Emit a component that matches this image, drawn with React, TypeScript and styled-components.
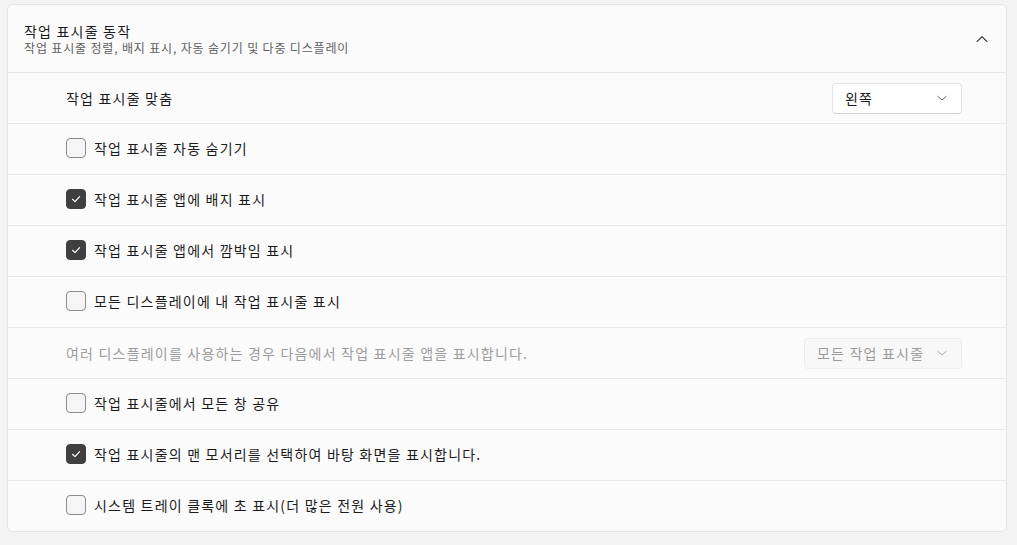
import styled, {createGlobalStyle} from 'styled-components'

const GlobalStyle = createGlobalStyle`
  html, body {
    margin: 0;
    padding: 0;
    background: #f3f3f3;
    font-family: "Noto Sans CJK KR", "Noto Sans", sans-serif;
    letter-spacing: 0.075em;
    color: #1b1b1b;
  }
`

const Page = styled.div`
  padding: 4px 10px 14px 7px;
`

const Card = styled.section`
  background: #fbfbfb;
  border: 1px solid #e5e5e5;
  border-radius: 6px;
  overflow: hidden;
`

const Header = styled.div`
  display: flex;
  align-items: center;
  height: 67px;
  padding: 0 18px 0 16px;
  border-bottom: 1px solid #e5e5e5;
`

const HeaderText = styled.div`
  flex: 1;
  display: flex;
  flex-direction: column;
  padding-top: 1px;
`

const Title = styled.div`
  font-size: 14px;
  line-height: 18px;
  color: #1b1b1b;
`

const Subtitle = styled.div`
  font-size: 12px;
  line-height: 16px;
  letter-spacing: 0.07em;
  color: #5f5f5f;
`

const Row = styled.div<{ $check?: boolean }>`
  display: flex;
  align-items: center;
  box-sizing: border-box;
  height: 50px;
  padding: 0 44px ${p => (p.$check ? '2px' : '0')} 58px;
  border-top: 1px solid #e8e8e8;
  &:first-of-type { border-top: none; height: 50px; }
  & + & { height: 51px; }
`

const Label = styled.span<{ $disabled?: boolean }>`
  flex: 1;
  font-size: 14px;
  color: ${p => (p.$disabled ? '#9c9c9c' : '#1b1b1b')};
`

const CheckLabel = styled.label`
  display: flex;
  align-items: center;
  gap: 8px;
  font-size: 14px;
  color: #1b1b1b;
`

const Box = styled.span<{ $checked?: boolean }>`
  display: inline-flex;
  align-items: center;
  justify-content: center;
  box-sizing: border-box;
  width: 20px;
  height: 20px;
  border-radius: 4px;
  border: 1px solid ${p => (p.$checked ? '#3f3f3f' : '#8c8c8c')};
  background: ${p => (p.$checked ? '#3f3f3f' : '#f5f5f5')};
`

const Select = styled.div<{ $disabled?: boolean; $width: number }>`
  display: flex;
  align-items: center;
  justify-content: space-between;
  box-sizing: border-box;
  width: ${p => p.$width}px;
  height: 31px;
  padding: 0 14px 0 12px;
  border-radius: 4px;
  font-size: 14px;
  background: ${p => (p.$disabled ? '#f8f8f8' : '#ffffff')};
  border: 1px solid ${p => (p.$disabled ? '#ececec' : '#e3e3e3')};
  border-bottom-color: ${p => (p.$disabled ? '#ececec' : '#d0d0d0')};
  color: ${p => (p.$disabled ? '#9c9c9c' : '#1b1b1b')};
`

const Chevron = ({up, color = '#5f5f5f', size = 10}: { up?: boolean; color?: string; size?: number }) => (
  <svg width={size} height={size} viewBox="0 0 10 10" fill="none">
    <path d={up ? 'M1 7 L5 3 L9 7' : 'M1 3.5 L5 7 L9 3.5'} stroke={color} strokeWidth="1" strokeLinecap="round" strokeLinejoin="round" />
  </svg>
)

const Check = () => (
  <svg width="12" height="12" viewBox="0 0 12 12" fill="none">
    <path d="M2.5 6.3 L5 8.6 L9.6 3.6" stroke="#ffffff" strokeWidth="1.2" strokeLinecap="round" strokeLinejoin="round" />
  </svg>
)

const checks: { label: string; checked: boolean }[] = [
  {label: '작업 표시줄 자동 숨기기', checked: false},
  {label: '작업 표시줄 앱에 배지 표시', checked: true},
  {label: '작업 표시줄 앱에서 깜박임 표시', checked: true},
  {label: '모든 디스플레이에 내 작업 표시줄 표시', checked: false},
]

const checksAfter: { label: string; checked: boolean }[] = [
  {label: '작업 표시줄에서 모든 창 공유', checked: false},
  {label: '작업 표시줄의 맨 모서리를 선택하여 바탕 화면을 표시합니다.', checked: true},
  {label: '시스템 트레이 클록에 초 표시(더 많은 전원 사용)', checked: false},
]

function CheckRow({label, checked}: { label: string; checked: boolean }) {
  return (
    <Row $check>
      <CheckLabel>
        <Box $checked={checked}>{checked && <Check />}</Box>
        {label}
      </CheckLabel>
    </Row>
  )
}

export default function App() {
  return (
    <Page>
      <GlobalStyle />
      <Card>
        <Header>
          <HeaderText>
            <Title>작업 표시줄 동작</Title>
            <Subtitle>작업 표시줄 정렬, 배지 표시, 자동 숨기기 및 다중 디스플레이</Subtitle>
          </HeaderText>
          <Chevron up color="#333" size={12} />
        </Header>
        <div>
          <Row>
            <Label>작업 표시줄 맞춤</Label>
            <Select $width={130}>
              <span>왼쪽</span>
              <Chevron />
            </Select>
          </Row>
          {checks.map(c => <CheckRow key={c.label} {...c} />)}
          <Row>
            <Label $disabled>여러 디스플레이를 사용하는 경우 다음에서 작업 표시줄 앱을 표시합니다.</Label>
            <Select $width={158} $disabled>
              <span>모든 작업 표시줄</span>
              <Chevron color="#a8a8a8" />
            </Select>
          </Row>
          {checksAfter.map(c => <CheckRow key={c.label} {...c} />)}
        </div>
      </Card>
    </Page>
  )
}
